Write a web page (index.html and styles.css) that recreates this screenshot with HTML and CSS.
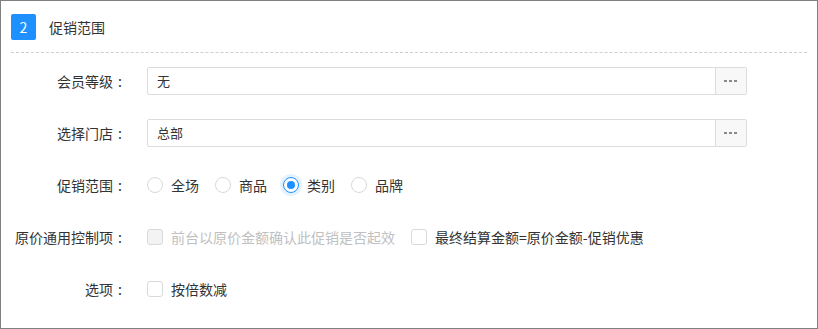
FILE: index.html
```html
<!DOCTYPE html>
<html lang="zh-CN">
<head>
    <meta charset="UTF-8">
    <title>促销范围</title>
    <link rel="stylesheet" href="styles.css">
</head>
<body>
    <div class="panel">
        <div class="panel-header">
            <span class="step-badge">2</span>
            <span class="panel-title">促销范围</span>
        </div>

        <div class="form">
            <div class="form-row">
                <label class="form-label">会员等级<span class="colon">:</span></label>
                <div class="picker">
                    <span class="picker-value">无</span>
                    <button class="picker-btn" type="button">
                        <svg width="14" height="2" viewBox="0 0 14 2"><rect x="0" y="0" width="3" height="2" fill="#8a8a8a"/><rect x="5" y="0" width="3" height="2" fill="#8a8a8a"/><rect x="10" y="0" width="3" height="2" fill="#8a8a8a"/></svg>
                    </button>
                </div>
            </div>

            <div class="form-row">
                <label class="form-label">选择门店<span class="colon">:</span></label>
                <div class="picker">
                    <span class="picker-value">总部</span>
                    <button class="picker-btn" type="button">
                        <svg width="14" height="2" viewBox="0 0 14 2"><rect x="0" y="0" width="3" height="2" fill="#8a8a8a"/><rect x="5" y="0" width="3" height="2" fill="#8a8a8a"/><rect x="10" y="0" width="3" height="2" fill="#8a8a8a"/></svg>
                    </button>
                </div>
            </div>

            <div class="form-row">
                <label class="form-label">促销范围<span class="colon">:</span></label>
                <div class="options">
                    <span class="option"><span class="radio"></span>全场</span>
                    <span class="option"><span class="radio"></span>商品</span>
                    <span class="option"><span class="radio checked"></span>类别</span>
                    <span class="option"><span class="radio"></span>品牌</span>
                </div>
            </div>

            <div class="form-row">
                <label class="form-label">原价通用控制项<span class="colon">:</span></label>
                <div class="options">
                    <span class="option disabled"><span class="checkbox"></span>前台以原价金额确认此促销是否起效</span>
                    <span class="option"><span class="checkbox"></span>最终结算金额=原价金额-促销优惠</span>
                </div>
            </div>

            <div class="form-row">
                <label class="form-label">选项<span class="colon">:</span></label>
                <div class="options">
                    <span class="option"><span class="checkbox"></span>按倍数减</span>
                </div>
            </div>
        </div>
    </div>
</body>
</html>
```

FILE: styles.css
```css
* {
    margin: 0;
    padding: 0;
    box-sizing: border-box;
}

body {
    font-family: "Noto Sans CJK SC", "Noto Sans", sans-serif;
    font-size: 14px;
    color: #333;
    background: #fff;
}

.panel {
    width: 818px;
    height: 329px;
    border: 1px solid #808080;
}

.panel-header {
    display: flex;
    align-items: center;
    margin: 0 10px;
    padding: 13px 0 12px;
    border-bottom: 1px dashed #cfcfcf;
}

.step-badge {
    width: 25px;
    height: 26px;
    border-radius: 2px;
    background-color: #1e90ff;
    color: #fff;
    display: flex;
    justify-content: center;
    align-items: center;
    font-size: 14px;
}

.panel-title {
    margin-left: 13px;
    line-height: 26px;
}

.form {
    padding-top: 14px;
}

.form-row {
    display: flex;
    align-items: center;
    height: 28px;
    margin-bottom: 24px;
}

.form-label {
    width: 126px;
    margin-right: 20px;
    text-align: right;
    white-space: nowrap;
}

/* full-width slot with the colon centred in it */
.colon {
    display: inline-block;
    width: 14px;
    text-align: center;
}

.picker {
    width: 600px;
    height: 28px;
    display: flex;
    border: 1px solid #dcdcdc;
    border-radius: 2px;
}

.picker-value {
    flex: 1;
    padding-left: 9px;
    line-height: 26px;
    font-size: 13px;
}

.picker-btn {
    width: 31px;
    height: 26px;
    border: none;
    border-left: 1px solid #dcdcdc;
    background-color: #f8f8f8;
    display: flex;
    justify-content: center;
    align-items: center;
}

.options {
    display: flex;
    align-items: center;
    gap: 16px;
}

.option {
    display: flex;
    align-items: center;
    gap: 8px;
    white-space: nowrap;
}

.option.disabled {
    color: #c0c0c0;
}

.radio {
    width: 16px;
    height: 16px;
    border: 1px solid #d9d9d9;
    border-radius: 50%;
    background: #fff;
}

.radio.checked {
    border-color: #1e90ff;
    box-shadow: 0 0 0 3px rgba(30, 144, 255, 0.12);
    position: relative;
}

.radio.checked::after {
    content: "";
    position: absolute;
    left: 3px;
    top: 3px;
    width: 8px;
    height: 8px;
    border-radius: 50%;
    background-color: #1e90ff;
}

.checkbox {
    width: 16px;
    height: 16px;
    border: 1px solid #d9d9d9;
    border-radius: 3px;
    background: #fff;
}

.disabled .checkbox {
    background-color: #f3f3f3;
}
```
